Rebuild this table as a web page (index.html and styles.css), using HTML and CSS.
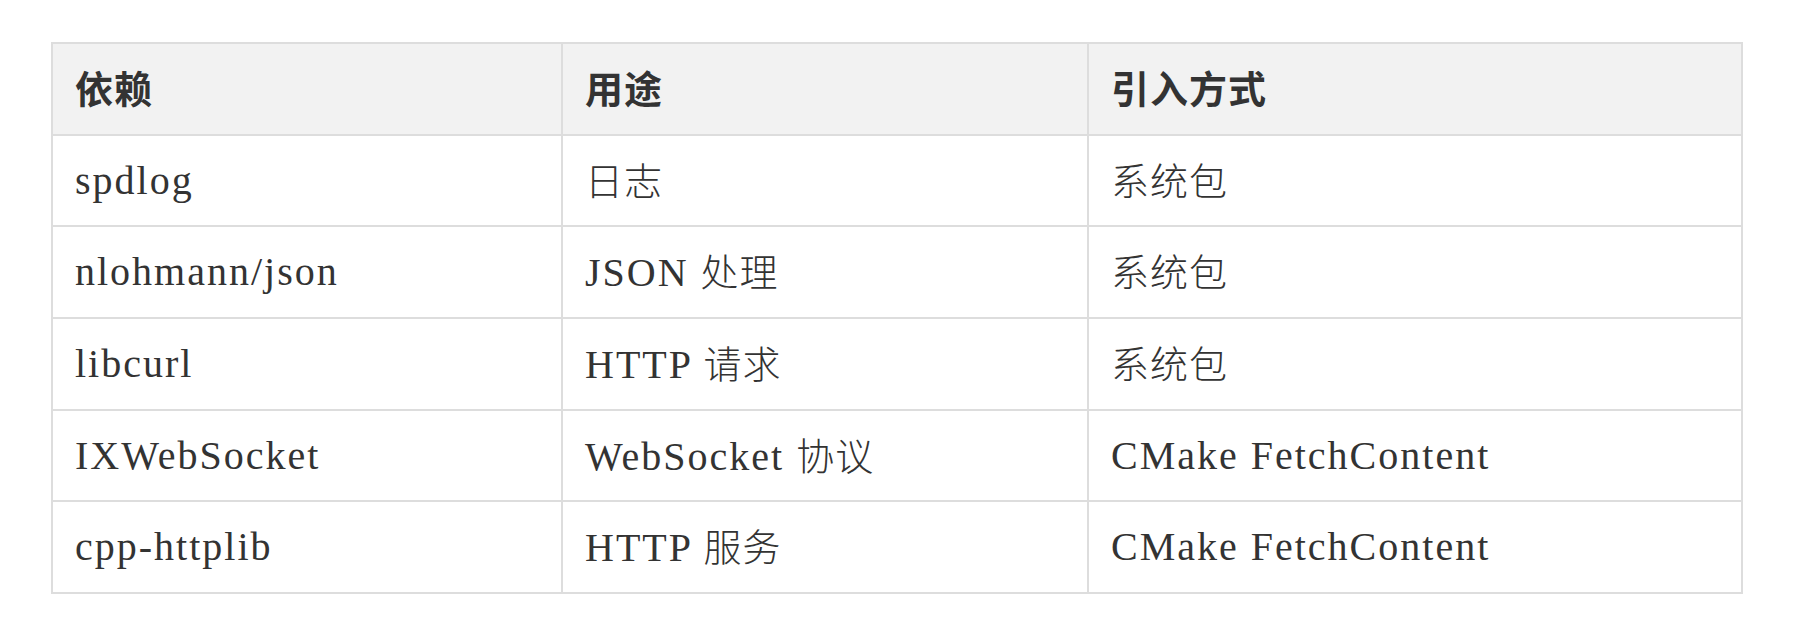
FILE: index.html
```html
<!DOCTYPE html>
<html lang="zh-CN">
<head>
<meta charset="utf-8">
<title>依赖</title>
<link rel="stylesheet" href="styles.css">
</head>
<body>
<main class="page">
  <table class="deps">
    <colgroup>
      <col class="c-name">
      <col class="c-use">
      <col class="c-how">
    </colgroup>
    <thead>
      <tr><th><span class="zh">依赖</span></th><th><span class="zh">用途</span></th><th><span class="zh">引入方式</span></th></tr>
    </thead>
    <tbody>
      <tr><td>spdlog</td><td><span class="zh">日志</span></td><td><span class="zh">系统包</span></td></tr>
      <tr><td>nlohmann/json</td><td>JSON <span class="zh">处理</span></td><td><span class="zh">系统包</span></td></tr>
      <tr><td>libcurl</td><td>HTTP <span class="zh">请求</span></td><td><span class="zh">系统包</span></td></tr>
      <tr><td>IXWebSocket</td><td>WebSocket <span class="zh">协议</span></td><td>CMake FetchContent</td></tr>
      <tr><td>cpp-httplib</td><td>HTTP <span class="zh">服务</span></td><td>CMake FetchContent</td></tr>
    </tbody>
  </table>
</main>
</body>
</html>
```

FILE: styles.css
```css
html, body {
  margin: 0;
  padding: 0;
  background: #ffffff;
}

.page {
  padding: 42px 0 0 51px;
}

.deps {
  border-collapse: collapse;
  table-layout: fixed;
  width: 1690px;
  color: #333333;
  font-family: "Liberation Serif", "Noto Sans CJK SC", serif;
  font-size: 40px;
  letter-spacing: 2px;
}

.c-name { width: 510px; }
.c-use { width: 526px; }
.c-how { width: 654px; }

.deps th,
.deps td {
  border: 2px solid #dddddd;
  height: 89.7px;
  padding: 0 22px;
  text-align: left;
  vertical-align: middle;
  white-space: nowrap;
  line-height: 1;
}

.deps th {
  background: #f2f2f2;
  font-weight: 700;
}

.zh {
  font-family: "Noto Sans CJK SC", sans-serif;
  font-size: 38px;
  font-weight: 300;
  letter-spacing: 1px;
}

.deps th .zh {
  font-weight: 700;
}
```
